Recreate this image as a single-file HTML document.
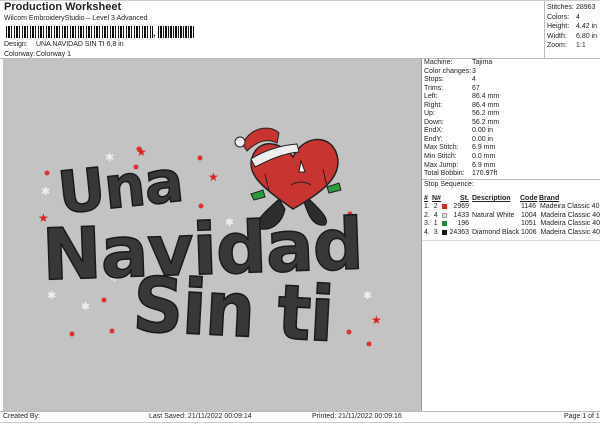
<!DOCTYPE html>
<html><head><meta charset="utf-8"><style>
*{margin:0;padding:0;box-sizing:border-box}
body{width:600px;height:424px;background:#fff;font-family:"Liberation Sans",sans-serif;font-size:7px;color:#222;position:relative;overflow:hidden}
.a{position:absolute;white-space:nowrap}
.big{font-weight:bold;color:#383838;-webkit-text-stroke:1.5px #1a1a1a;font-family:"DejaVu Sans","Liberation Sans",sans-serif;line-height:1}
</style></head><body>
<div class="a" style="left:4px;top:1px;font-size:11px;font-weight:bold">Production Worksheet</div>
<div class="a" style="left:4px;top:15px">Wilcom EmbroideryStudio – Level 3 Advanced</div>
<div class="a" style="left:6px;top:26px;width:147px;height:12px;background:repeating-linear-gradient(90deg,#111 0 1px,#fff 1px 2px,#111 2px 4px,#fff 4px 5px,#111 5px 6px,#fff 6px 8px)"></div>
<div class="a" style="left:153px;top:28px;font-size:9px;font-weight:bold">,</div>
<div class="a" style="left:158px;top:26px;width:36px;height:12px;background:repeating-linear-gradient(90deg,#111 0 1px,#fff 1px 2px,#111 2px 4px,#fff 4px 5px)"></div>
<div class="a" style="left:4px;top:41px">Design:</div><div class="a" style="left:36px;top:41px">UNA NAVIDAD SIN TI 6,8 in</div>
<div class="a" style="left:4px;top:51px">Colorway:</div><div class="a" style="left:36px;top:51px">Colorway 1</div>
<div class="a" style="left:0;top:58px;width:600px;border-top:1px solid #bbb"></div>
<div class="a" style="left:0;top:0;width:600px;height:1px;background:#ccc"></div>
<div class="a" style="left:544px;top:0;width:1px;height:58px;background:#bbb"></div>
<div class="a" style="left:547px;top:3px;line-height:9.6px">Stitches:<br>Colors:<br>Height:<br>Width:<br>Zoom:</div>
<div class="a" style="left:576px;top:3px;line-height:9.6px">28963<br>4<br>4.42 in<br>6.80 in<br>1:1</div>
<div class="a" style="left:3px;top:59px;width:418px;height:352px;background:#c3c3c3"></div>
<div class="a" style="left:421px;top:59px;width:1px;height:352px;background:#999"></div>
<svg class="a" style="left:3px;top:59px" width="418" height="352">
<g fill="#d33">
<circle cx="44" cy="114" r="2.5"/><circle cx="136" cy="90" r="2.5"/><circle cx="133" cy="108" r="2.5"/><circle cx="197" cy="99" r="2.5"/><circle cx="198" cy="147" r="2.5"/><circle cx="347" cy="155" r="2.5"/><circle cx="101" cy="241" r="2.5"/><circle cx="109" cy="272" r="2.5"/><circle cx="69" cy="275" r="2.5"/><circle cx="346" cy="273" r="2.5"/><circle cx="366" cy="285" r="2.5"/>
</g>
<g fill="#d22" font-size="12" font-family="DejaVu Sans"><text x="133" y="97">★</text><text x="205" y="122">★</text><text x="35" y="163">★</text><text x="368" y="265">★</text></g>
<g fill="#eee" font-size="11" font-family="DejaVu Sans"><text x="102" y="102">✱</text><text x="38" y="136">✱</text><text x="222" y="167">✱</text><text x="107" y="222">✱</text><text x="44" y="240">✱</text><text x="78" y="251">✱</text><text x="360" y="240">✱</text></g>
<g transform="translate(8,0)">
<path d="M268 140 C258 150 240 162 250 170 C262 172 272 162 274 150Z M292 140 C296 152 300 168 314 166 C320 160 306 148 298 140Z" fill="#2d2d2d" stroke="#111"/>
<path d="M282 150 C250 128 234 114 242 96 C250 78 272 84 282 98 C292 76 320 74 326 96 C332 118 310 134 282 150Z" fill="#c8342f" stroke="#222" stroke-width="1.5"/>
<path d="M232 86 C236 70 258 64 268 74 L266 84 C254 78 244 84 236 92Z" fill="#c8342f" stroke="#222"/>
<circle cx="229" cy="83" r="5" fill="#eee" stroke="#222"/>
<path d="M240 100 C252 92 270 86 286 85 L288 93 C272 94 256 102 244 108Z" fill="#eee" stroke="#222"/>
<path d="M288 113 L290 102 L294 113Z" fill="#fff" stroke="#222"/>
<path d="M280 126 Q290 120 300 126" stroke="#222" fill="none"/>
<path d="M254 115 L258 132 M312 110 L316 128" stroke="#222"/>
<path d="M240 135 L252 131 L254 138 L243 141Z" fill="#2a9a3a" stroke="#222"/>
<path d="M316 128 L328 124 L330 131 L318 134Z" fill="#2a9a3a" stroke="#222"/>
</g>
</svg>
<div class="a big" style="left:58px;top:158px;font-size:58px;letter-spacing:-1px;transform:rotate(-6deg);transform-origin:50% 50%">Una</div>
<div class="a big" style="left:42px;top:214px;font-size:71px;letter-spacing:-1px;transform:rotate(-2deg);transform-origin:50% 50%">Navidad</div>
<div class="a big" style="left:135px;top:272px;font-size:70px;letter-spacing:-1px;transform:rotate(3deg) scaleY(1.08);transform-origin:50% 0">Sin ti</div>
<div class="a" style="left:424px;top:59px;line-height:8.55px">Machine:<br>Color changes:<br>Stops:<br>Trims:<br>Left:<br>Right:<br>Up:<br>Down:<br>EndX:<br>EndY:<br>Max Stitch:<br>Min Stitch:<br>Max Jump:<br>Total Bobbin:</div>
<div class="a" style="left:472px;top:59px;line-height:8.55px">Tajima<br>3<br>4<br>67<br>86.4 mm<br>86.4 mm<br>56.2 mm<br>56.2 mm<br>0.00 in<br>0.00 in<br>6.9 mm<br>0.0 mm<br>6.9 mm<br>170.97ft</div>
<div class="a" style="left:422px;top:179px;width:178px;border-top:1px solid #bbb"></div>
<div class="a" style="left:424px;top:181px">Stop Sequence:</div>
<div class="a" style="left:424px;top:194px;line-height:10px;font-weight:bold;text-decoration:underline">#</div>
<div class="a" style="left:432px;top:194px;line-height:10px;font-weight:bold;text-decoration:underline">N#</div>
<div class="a" style="left:460px;top:194px;line-height:10px;font-weight:bold;text-decoration:underline">St.</div>
<div class="a" style="left:472px;top:194px;line-height:10px;font-weight:bold;text-decoration:underline">Description</div>
<div class="a" style="left:520px;top:194px;line-height:10px;font-weight:bold;text-decoration:underline">Code</div>
<div class="a" style="left:539px;top:194px;line-height:10px;font-weight:bold;text-decoration:underline">Brand</div>
<div class="a" style="left:424px;top:203px;line-height:8.6px">1.&nbsp;&nbsp;2<br>2.&nbsp;&nbsp;4<br>3.&nbsp;&nbsp;1<br>4.&nbsp;&nbsp;3</div>
<div class="a" style="left:442px;top:204px;width:5px;height:5px;background:#d22"></div>
<div class="a" style="left:442px;top:213px;width:5px;height:5px;background:#e8e8ee;border:1px solid #999"></div>
<div class="a" style="left:442px;top:221px;width:5px;height:5px;background:#1a8a3a"></div>
<div class="a" style="left:442px;top:230px;width:5px;height:5px;background:#111"></div>
<div class="a" style="left:449px;top:203px;line-height:8.6px;text-align:right;width:20px">2969<br>1433<br>196<br>24363</div>
<div class="a" style="left:472px;top:203px;line-height:8.6px">&nbsp;<br>Natural White<br>&nbsp;<br>Diamond Black</div>
<div class="a" style="left:521px;top:203px;line-height:8.6px">1146&nbsp; Madeira Classic 40<br>1004&nbsp; Madeira Classic 40<br>1051&nbsp; Madeira Classic 40<br>1006&nbsp; Madeira Classic 40</div>
<div class="a" style="left:422px;top:240px;width:178px;border-top:1px solid #ddd"></div>
<div class="a" style="left:0;top:411px;width:600px;border-top:1px solid #bbb"></div>
<div class="a" style="left:0;top:422px;width:600px;border-top:1px solid #ccc"></div>
<div class="a" style="left:3px;top:413px">Created By:</div>
<div class="a" style="left:149px;top:413px">Last Saved: 21/11/2022 00:09:14</div>
<div class="a" style="left:312px;top:413px">Printed: 21/11/2022 00:09:16</div>
<div class="a" style="left:564px;top:413px">Page 1 of 1</div>
</body></html>
